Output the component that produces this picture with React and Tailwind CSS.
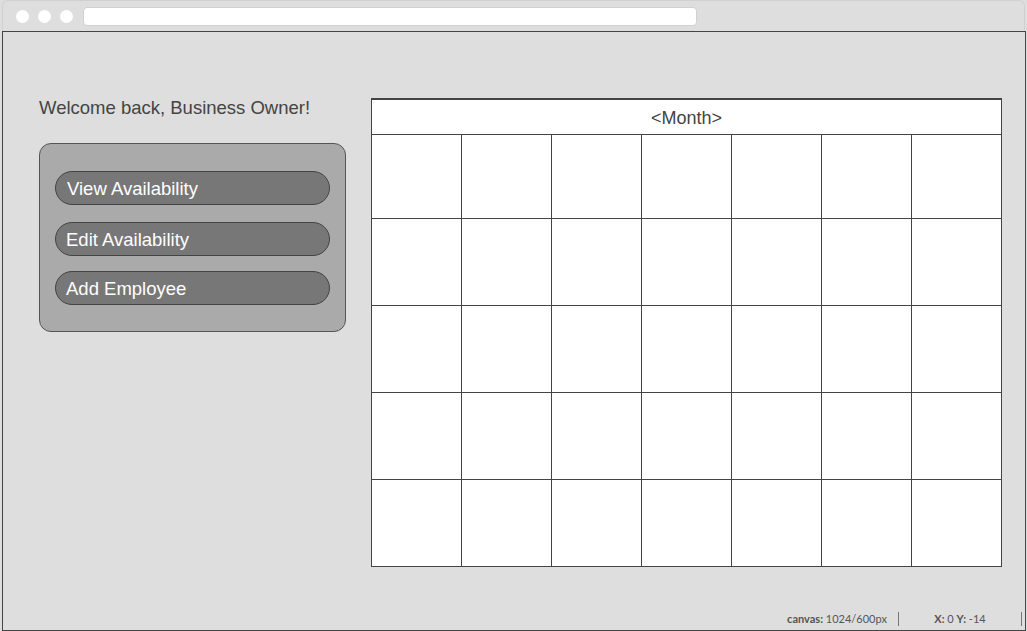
export default function App() {
    const weeks = [0, 1, 2, 3, 4];
    const days = [0, 1, 2, 3, 4, 5, 6];
    const menu = ['View Availability', 'Edit Availability', 'Add Employee'];

    return (
        <div className="w-[1027px] h-[631px] bg-[#dedede] overflow-hidden font-['Liberation_Sans',Arial,sans-serif]">
            {/* browser chrome */}
            <div className="h-[31px] mx-[2px] flex items-center border-x border-t border-[#d0d0d0] rounded-t-[6px]">
                <div className="flex items-center gap-[9px] pl-[13px]">
                    <span className="w-[13px] h-[13px] rounded-full bg-white" />
                    <span className="w-[13px] h-[13px] rounded-full bg-white" />
                    <span className="w-[13px] h-[13px] rounded-full bg-white" />
                </div>
                <div className="ml-[10px] w-[614px] h-[19px] bg-white rounded-[4px] border border-[#d0d0d0]" />
            </div>

            {/* page frame */}
            <div className="ml-[2px] w-[1024px] h-[600px] border border-[#444] flex flex-col">
                <div className="flex items-start pt-[65px] pl-[36px]">
                    <div className="w-[307px] flex flex-col">
                        <h1 className="text-[18.5px] leading-[21px] text-[#444]">Welcome back, Business Owner!</h1>

                        <div className="mt-[25px] h-[189px] bg-[#aaa] border border-[#555] rounded-[12px] px-[15px] pt-[27px]">
                            {menu.map((label, i) => (
                                <button
                                    key={label}
                                    className={`w-full h-[34px] flex items-center bg-[#777] border border-[#444] rounded-full text-left text-[18.5px] text-white pt-[1px] ${i === 0 ? 'pl-[11px]' : 'pl-[10px]'} ${i === 1 ? 'mt-[17px]' : i === 2 ? 'mt-[15px]' : ''}`}
                                >
                                    {label}
                                </button>
                            ))}
                        </div>
                    </div>

                    <div className="ml-[25px] mt-[1px] w-[631px] bg-white border-t-2 border-l border-[#444]">
                        <div className="h-[35px] pt-[3px] flex items-center justify-center border-r border-b border-[#444] text-[18px] text-[#444]">
                            &lt;Month&gt;
                        </div>
                        {weeks.map((w) => (
                            <div key={w} className={`grid grid-cols-7 ${w === 0 ? 'h-[84px]' : 'h-[87px]'}`}>
                                {days.map((d) => (
                                    <div key={d} className="border-r border-b border-[#444]" />
                                ))}
                            </div>
                        ))}
                    </div>
                </div>

                {/* status bar */}
                <div className="mt-auto mb-[4px] flex justify-end items-center pr-[3px] font-['Lato',sans-serif] text-[11px] text-[#555]">
                    <div className="w-[123px] h-[14px] flex items-center justify-center border-r border-[#777]">
                        <span className="font-bold">canvas:</span>&nbsp;1024/600px
                    </div>
                    <div className="w-[123px] h-[14px] flex items-center justify-center border-r border-[#777]">
                        <span className="font-bold">X:</span>&nbsp;0&nbsp;<span className="font-bold">Y:</span>&nbsp;-14
                    </div>
                </div>
            </div>
        </div>
    );
}
